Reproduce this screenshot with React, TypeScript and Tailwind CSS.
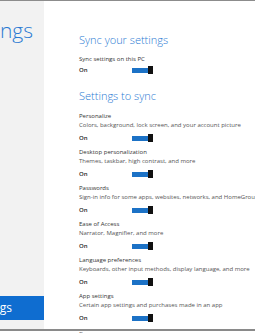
import React from "react";

const items = [
  { t: "Personalize", d: "Colors, background, lock screen, and your account picture" },
  { t: "Desktop personalization", d: "Themes, taskbar, high contrast, and more" },
  { t: "Passwords", d: "Sign-in info for some apps, websites, networks, and HomeGroup" },
  { t: "Ease of Access", d: "Narrator, Magnifier, and more" },
  { t: "Language preferences", d: "Keyboards, other input methods, display language, and more" },
  { t: "App settings", d: "Certain app settings and purchases made in an app" },
];

function Toggle() {
  return (
    <div className="flex items-center h-[8px]">
      <div className="w-[16px] h-[5px] bg-[#1c72c6]" />
      <div className="w-[5px] h-[8px] bg-[#111]" />
    </div>
  );
}

function OnRow({ mt }: { mt: string }) {
  return (
    <div className={`flex items-center h-[10px] ${mt}`}>
      <div className="w-[53px] text-[6px] font-semibold text-[#222] leading-[10px]">On</div>
      <Toggle />
    </div>
  );
}

export default function App() {
  return (
    <div className="w-[255px] h-[333px] overflow-hidden bg-white flex flex-col font-['Open_Sans',sans-serif]">
      <div className="h-[1px] bg-[#8c8c8c]" />
      <div className="flex h-[328px]">
        <div className="w-[44px] shrink-0 bg-[#f2f2f2] flex flex-col">
          <div className="mt-[16px] overflow-hidden">
            <div className="flex justify-end pr-[11px]">
              <span className="shrink-0 whitespace-nowrap text-[21px] leading-[26px] font-light text-[#2a7ad3]">Settings</span>
            </div>
          </div>
          <div className="flex-1" />
          <div className="h-[24px] bg-[#0f6dd0] overflow-hidden mb-[9px]">
            <div className="h-full flex justify-end items-center pr-[32px]">
              <span className="shrink-0 whitespace-nowrap text-[12px] leading-[16px] text-white">Sync settings</span>
            </div>
          </div>
        </div>
        <div className="flex-1 min-w-0 pl-[35px] flex flex-col overflow-hidden whitespace-nowrap">
          <div className="mt-[32px] text-[11px] leading-[14px] font-light text-[#2a7ad3]">Sync your settings</div>
          <div className="mt-[8px] text-[6px] leading-[9px] text-[#333]">Sync settings on this PC</div>
          <OnRow mt="mt-[1px]" />
          <div className="mt-[14px] text-[11px] leading-[14px] font-light text-[#2a7ad3]">Settings to sync</div>
          <div className="mt-[9px] flex flex-col">
            {items.map((it) => (
              <div key={it.t} className="flex flex-col h-[36px]">
                <div className="text-[6px] leading-[9px] text-[#333]">{it.t}</div>
                <div className="text-[6px] leading-[9px] text-[#555]">{it.d}</div>
                <OnRow mt="mt-[3px]" />
              </div>
            ))}
          </div>
        </div>
      </div>
      <div className="h-[2px] bg-[#8a8a8a]" />
      <div className="h-[2px] overflow-hidden pl-[79px]">
        <div className="text-[6px] leading-[6px] text-[#666]">Browser</div>
      </div>
    </div>
  );
}
